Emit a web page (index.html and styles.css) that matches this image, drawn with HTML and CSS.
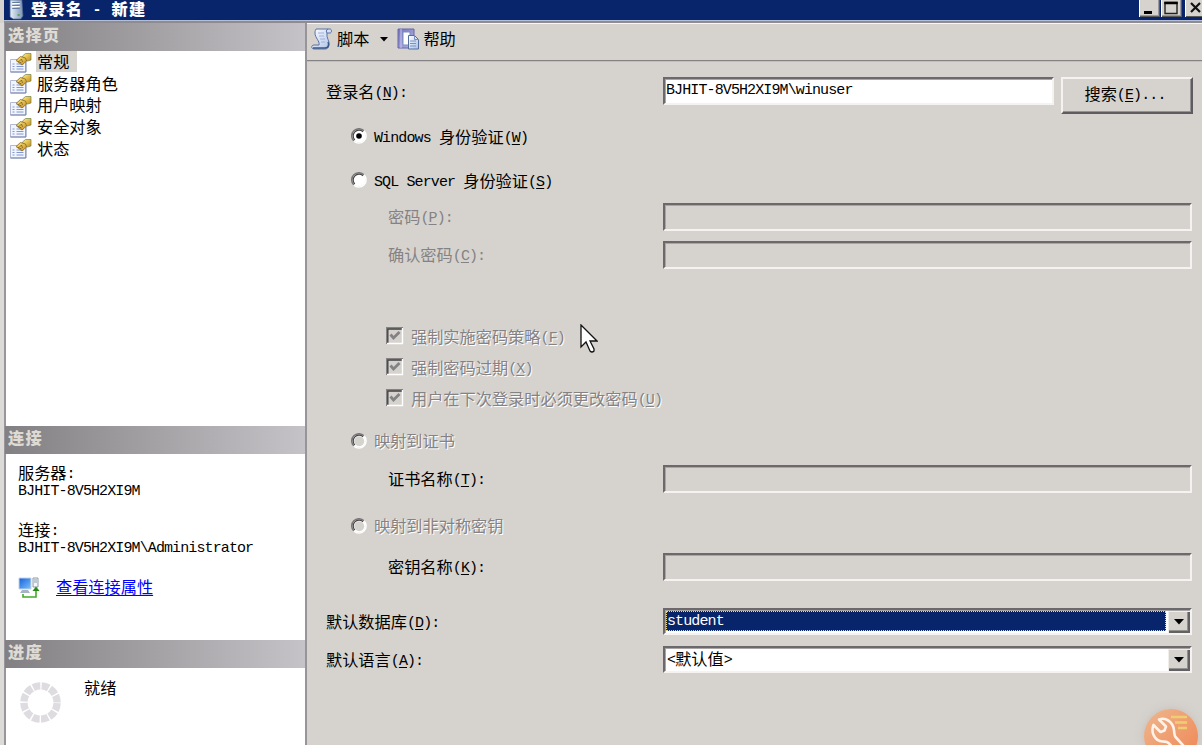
FILE: index.html
```html
<!DOCTYPE html>
<html lang="zh-CN">
<head>
<meta charset="utf-8">
<title>登录名 - 新建</title>
<link rel="stylesheet" href="styles.css">
</head>
<body>
<svg width="0" height="0" class="defs">
  <defs>
    <linearGradient id="gold" x1="0" y1="0" x2="1" y2="1"><stop offset="0" stop-color="#fff08a"/><stop offset="1" stop-color="#c68a16"/></linearGradient>
    <linearGradient id="paper" x1="0" y1="0" x2="1" y2="1"><stop offset="0" stop-color="#ffffff"/><stop offset="1" stop-color="#a9bfe8"/></linearGradient>
    <linearGradient id="book" x1="0" y1="0" x2="1" y2="1"><stop offset="0" stop-color="#7474bd"/><stop offset="1" stop-color="#b7b6e6"/></linearGradient>
    <linearGradient id="screen" x1="0" y1="0" x2="1" y2="1"><stop offset="0" stop-color="#1262d8"/><stop offset="1" stop-color="#7fc0ff"/></linearGradient>
    <linearGradient id="tower" x1="0" y1="0" x2="1" y2="0"><stop offset="0" stop-color="#e8f1fb"/><stop offset="1" stop-color="#7d94b5"/></linearGradient>
    <symbol id="page-icon" viewBox="0 0 22 20">
      <path d="M1 6.500h15v12.500H1z" fill="#f1f5ff" stroke="#b2b9d4"/>
      <path d="M1 19h15.500V8" fill="none" stroke="#7583ad"/>
      <path d="M3 11h2m2 0h7M3 13.500h2m2 0h7M3 16h2m2 0h7" stroke="#8296cf"/>
      <path d="M13 3l3-2.500h5.500V7l-3.500 1-4-1z" fill="url(#gold)" stroke="#718149" stroke-width=".7"/>
      <path d="M6.500 7.500L11 3.500l5 1.500 1 3-4.500 4z" fill="url(#gold)" stroke="#8b681d" stroke-width=".8"/>
      <path d="M10 8l2-2 1 3M8 8l4 2" fill="none" stroke="#765b21" stroke-width=".8"/>
    </symbol>
  </defs>
</svg>
<div class="window">
  <header class="titlebar">
    <svg class="server" viewBox="0 0 14 20" preserveAspectRatio="none"><path d="M1 0h11l1 16-2 3H4l-3-2z" fill="url(#tower)" stroke="#526b95" stroke-width=".7"/><path d="M3 2.500h7M3 5.500h7M3 8.500h7" stroke="#647b9e"/><path d="M3 3.500h7M3 6.500h7" stroke="#fff"/><path d="M8 14h2v2H8z" fill="#5da45b"/></svg>
    <h1>登录名<span class="l"> - </span>新建</h1>
    <div class="controls">
      <i><svg viewBox="0 0 20 17"><path d="M5 12.500h8" stroke="#000" stroke-width="3"/></svg></i>
      <i><svg viewBox="0 0 20 17"><path d="M4 2.500h12v11H4z" fill="none" stroke="#222" stroke-width="1.400"/><path d="M3.300 3h13.400" stroke="#000" stroke-width="2.500"/></svg></i>
      <i class="close"><svg viewBox="0 0 20 17"><path d="M6 3l9 9M15 3l-9 9" stroke="#111" stroke-width="2.200"/></svg></i>
    </div>
  </header>
  <div class="body">
    <aside class="side">
      <h2>选择页</h2>
      <ul class="pages">
        <li><svg><use href="#page-icon"/></svg><span class="selected">常规</span></li>
        <li><svg><use href="#page-icon"/></svg><span>服务器角色</span></li>
        <li><svg><use href="#page-icon"/></svg><span>用户映射</span></li>
        <li><svg><use href="#page-icon"/></svg><span>安全对象</span></li>
        <li><svg><use href="#page-icon"/></svg><span>状态</span></li>
      </ul>
      <h2>连接</h2>
      <section class="connection">
        <p>服务器<span class="l">:</span></p>
        <p class="value l">BJHIT-8V5H2XI9M</p>
        <p class="second">连接<span class="l">:</span></p>
        <p class="value l">BJHIT-8V5H2XI9M\Administrator</p>
        <div class="props">
          <svg viewBox="0 0 22 22"><path d="M1 1h12v11H1z" fill="url(#screen)" stroke="#c3d3e7"/><path d="M4 13h6l2 3H2z" fill="#a7b4c6"/><path d="M15 1h5v9h-5z" fill="#f3f5f8" stroke="#8e9bad"/><path d="M16 3h3M16 5h3" stroke="#8e9bad"/><path d="M5 17v3h13v-8" fill="none" stroke="#46a928" stroke-width="1.600"/><path d="M14.500 14L18 9.500l3.500 4.500z" fill="#278a17"/></svg>
          <a href="#">查看连接属性</a>
        </div>
      </section>
      <h2>进度</h2>
      <section class="progress">
        <svg viewBox="0 0 40 40"><circle cx="20" cy="20" r="16.200" fill="none" stroke="#dedce0" stroke-width="7.200" stroke-dasharray="7.100 1.382" stroke-dashoffset="-.69"/></svg>
        <span>就绪</span>
      </section>
    </aside>
    <main class="main">
      <nav class="toolbar">
        <svg viewBox="0 0 22 22"><path d="M5 1h14c2 0 2 4 0 4h-3c-1 5 3 8 2 12-.5 3-2 4-4 4H3c-3 0-3-4 0-4h5c1-4-4-7-4-12 0-2 .5-3 1-4z" fill="url(#paper)" stroke="#5870a5"/><path d="M7 5h6M8 8h5M9 11h5M10 14h4" stroke="#9db2dc"/><path d="M2 20h12c4 0 4-4 3-6" fill="none" stroke="#3c5787" stroke-width="1.500"/><path d="M16 5c-1-1-1-3 1-4" fill="none" stroke="#5870a5"/></svg>
        <span>脚本</span>
        <svg class="arrow" viewBox="0 0 8 5"><path d="M0 0h8L4 4.500z"/></svg>
        <svg viewBox="0 0 22 22"><path d="M1 1h16v19H1z" fill="url(#book)" stroke="#6766a9"/><path d="M4 1v19" stroke="#c8c8f0"/><path d="M6 4h7v13H6z" fill="#fff" stroke="#7790bd"/><path d="M11.500 7.500h6l4 4V21h-10z" fill="url(#paper)" stroke="#536f9e"/><path d="M17.500 7.500v4h4M13 13h6M13 15.500h6M13 18h6" fill="none" stroke="#7791c2"/></svg>
        <span class="help">帮助</span>
      </nav>
      <form class="form">
        <div class="row login">
          <label>登录名<span class="l">(<u>N</u>):</span></label>
          <div class="field active l">BJHIT-8V5H2XI9M\winuser</div>
          <button type="button">搜索<span class="l">(<u>E</u>)...</span></button>
        </div>
        <div class="option windows"><svg viewBox="0 0 16 16"><use href="#radio-on"/></svg><span><span class="l">Windows </span>身份验证<span class="l">(<u>W</u>)</span></span></div>
        <div class="option sql"><svg viewBox="0 0 16 16"><use href="#radio"/></svg><span><span class="l">SQL Server </span>身份验证<span class="l">(<u>S</u>)</span></span></div>
        <div class="row password sub dim"><label>密码<span class="l">(<u>P</u>):</span></label><div class="field"></div></div>
        <div class="row confirm sub dim"><label>确认密码<span class="l">(<u>C</u>):</span></label><div class="field"></div></div>
        <div class="checks">
          <div class="check"><svg viewBox="0 0 18 18"><use href="#checkbox"/></svg><span>强制实施密码策略<span class="l">(<u>F</u>)</span></span></div>
          <div class="check"><svg viewBox="0 0 18 18"><use href="#checkbox"/></svg><span>强制密码过期<span class="l">(<u>X</u>)</span></span></div>
          <div class="check"><svg viewBox="0 0 18 18"><use href="#checkbox"/></svg><span>用户在下次登录时必须更改密码<span class="l">(<u>U</u>)</span></span></div>
        </div>
        <div class="option cert off"><svg viewBox="0 0 16 16"><use href="#radio-off"/></svg><span>映射到证书</span></div>
        <div class="row certname sub"><label>证书名称<span class="l">(<u>T</u>):</span></label><div class="field"></div></div>
        <div class="option key off"><svg viewBox="0 0 16 16"><use href="#radio-off"/></svg><span>映射到非对称密钥</span></div>
        <div class="row keyname sub"><label>密钥名称<span class="l">(<u>K</u>):</span></label><div class="field"></div></div>
        <div class="row database"><label>默认数据库<span class="l">(<u>D</u>):</span></label>
          <div class="field combo"><span class="choice picked l">student</span><i class="drop"><svg viewBox="0 0 10 6"><path d="M0 0h10L5 5.500z"/></svg></i></div></div>
        <div class="row language"><label>默认语言<span class="l">(<u>A</u>):</span></label>
          <div class="field combo"><span class="choice"><span class="l">&lt;</span>默认值<span class="l">&gt;</span></span><i class="drop"><svg viewBox="0 0 10 6"><path d="M0 0h10L5 5.500z"/></svg></i></div></div>
      </form>
    </main>
  </div>
  <svg class="cursor" viewBox="0 0 18 30"><path d="M1 1v22l5-5 4 9q2 2 4 0v-2l-4-8h7z" fill="#fff" stroke="#111" stroke-width="1.300"/></svg>
  <div class="tool">
    <svg viewBox="0 0 54 54"><path d="M27 8h16M31 13.500h12M34 19h9" stroke="#edcf72" stroke-width="2.600"/><path d="M15 10.500l7 7-1.500 4-4 1.500-7-7c-3 7 1 16 9 16.500 3 .3 4-.5 6 1.500l12 12 6-6-11-12c-1.500-2-1-4-1.500-7-1-8-8-13-15-10.500z" fill="none" stroke="#fff2e9" stroke-width="2.600" stroke-linejoin="round"/></svg>
  </div>
</div>
<svg width="0" height="0" class="defs">
  <defs>
    <symbol id="radio" viewBox="0 0 16 16"><circle cx="8" cy="8" r="6.500" fill="#fff"/><path d="M13 2.800A7 7 0 0 0 2.800 13" fill="none" stroke="#777577" stroke-width="1.400"/><path d="M12 3.800A5.800 5.800 0 0 0 3.800 12" fill="none" stroke="#464446" stroke-width="1.200"/><path d="M13 2.800A7 7 0 0 1 2.800 13" fill="none" stroke="#fff" stroke-width="1.400"/></symbol>
    <symbol id="radio-on" viewBox="0 0 16 16"><use href="#radio"/><circle cx="8" cy="8" r="2.800"/></symbol>
    <symbol id="radio-off" viewBox="0 0 16 16"><use href="#radio"/><circle cx="8.200" cy="8.200" r="5" fill="#d6d3ce"/></symbol>
    <symbol id="checkbox" viewBox="0 0 18 18"><path d="M.5 17V.7H17" fill="none" stroke="#848284" stroke-width="1.400"/><path d="M1.800 16V2H16" fill="none" stroke="#424142" stroke-width="1.400"/><path d="M1 16.500h15.500V1" fill="none" stroke="#fff" stroke-width="1.400"/><path d="M4.500 7.500L7.500 11l6-6" fill="none" stroke="#848284" stroke-width="2.800"/></symbol>
  </defs>
</svg>
</body>
</html>
```
FILE: styles.css
```css
* { box-sizing: border-box; }
body { margin: 0; overflow: hidden; font: 16.200px/20px "Noto Sans CJK SC", sans-serif; color: #000; }
.defs { position: absolute; }
h1, h2, p, ul { margin: 0; padding: 0; }
i { font-style: normal; }
svg { display: block; flex: none; }
.l { font-family: "Liberation Mono", monospace; font-size: 15px; letter-spacing: -.890px; line-height: 1; white-space: pre; }
span.l { vertical-align: 1px; }
u { text-underline-offset: 2px; }
.window { position: relative; display: flex; flex-direction: column; width: 1202px; height: 745px; overflow: hidden; background: #d6d3ce; }

.titlebar { display: flex; flex: none; height: 23px; margin-left: 4px; padding-left: 5px; background: #08246b; border-bottom: 2px solid #8e8c91; box-shadow: inset 0 -1px #b4bdd6; }
.server { width: 15px; height: 20px; }
h1 { height: 20px; margin-left: 7px; font-size: 16.200px; line-height: 17px; letter-spacing: 1.200px; color: #fff; font-weight: 900; }
h1 .l { font-weight: 700; letter-spacing: .450px; }
.controls { display: flex; margin-left: auto; gap: 1px; }
.controls i { width: 21px; height: 17px; background: #d6d3ce; box-shadow: inset 1px 0 #fff, inset -1px -1px #5a5a5a, inset -2px -2px #9b999b; }
.controls svg { width: 20px; height: 17px; }
.controls .close { width: 17px; margin-left: 2px; overflow: hidden; box-shadow: inset 1px 0 #fff, inset 0 -1px #5a5a5a; }

.body { display: flex; flex: 1; min-height: 0; }
.side { display: flex; flex-direction: column; flex: none; width: 307px; border-left: 4px solid #dddbd7; border-right: 2px solid #97959a; background: #fff; box-shadow: inset 2px 0 #98969a; }
h2 { height: 28px; flex: none; margin-left: 1px; padding-left: 3px; font-size: 16.200px; line-height: 23px; letter-spacing: 1.200px; font-weight: 900; color: #dedbd5; background: linear-gradient(90deg, #828082, #c6c3c8); }
.pages { height: 375px; flex: none; padding: 0 0 0 5px; list-style: none; }
.pages li { display: flex; height: 21.600px; align-items: center; }
.pages svg { width: 23px; height: 20px; margin-top: 2px; }
.pages span { margin-left: 4px; padding: 0 1px; line-height: 21px; }
.pages .selected { padding-right: 8px; background: #d6d3ce; }
.connection { height: 186px; flex: none; padding: 8px 0 0 14px; }
.connection p { height: 20px; line-height: 20px; }
.connection .value { height: 14px; line-height: 20px; }
.connection .second { margin-top: 23px; }
.props { display: flex; align-items: center; margin-top: 20px; }
.props svg { width: 22px; height: 22px; margin-top: 4px; }
.props a { margin-left: 16px; color: #00f; text-underline-offset: 2px; }
.progress { display: flex; padding: 14px 0 0 16px; }
.progress svg { width: 41px; height: 41px; }
.progress span { margin-left: 23px; line-height: 11px; }

.main { flex: 1; min-width: 0; border-top: 1px solid #f8f7f5; }
.toolbar { display: flex; height: 37px; padding: 0 0 7px 4px; align-items: center; border-bottom: 1px solid #848284; box-shadow: 0 1px #c2bfbd; }
.toolbar svg { width: 22px; height: 22px; }
.toolbar span { margin-left: 4px; line-height: 18px; padding-bottom: 1px; }
.toolbar .arrow { width: 8px; height: 5px; margin: 2px 9px 0 11px; }
.toolbar .help { margin-left: 4px; }

.form { display: flex; flex-direction: column; padding: 16px 0 0 19px; }
.row { display: flex; height: 28px; flex: none; align-items: center; }
.row label { width: 337px; flex: none; padding-bottom: 2px; }
.sub label { padding-left: 62px; }
.dim label { color: #848284; }
.field { width: 529px; height: 28px; border: 2px solid; border-color: #6b696b #f5f3f1 #f5f3f1 #6b696b; box-shadow: inset 1px 1px #a8a5a4; }
.field.active { width: 391px; padding-left: 1px; background: #fff; line-height: 23px; }
.login { height: 37px; align-items: flex-start; }
.login label { padding-top: 4px; }
button { width: 132px; height: 37px; margin-left: 7px; padding: 0 4px 5px 0; font: inherit; color: #000; background: #d6d3ce; border: 2px solid; border-color: #f5f3f1 #5e5c5e #5e5c5e #f5f3f1; box-shadow: inset -1px -1px #949294; }
.option { display: flex; height: 20px; flex: none; align-items: center; padding-left: 25px; }
.option svg { width: 16px; height: 16px; margin-right: 7px; }
.option span, .check span { margin-top: -1px; }
.windows { margin-top: 12px; }
.sql { margin-top: 24px; }
.password { margin-top: 12px; height: 29px; }
.confirm { margin-top: 9px; height: 29px; }
.checks { display: flex; flex-direction: column; gap: 11px; margin-top: 57px; padding-left: 60px; }
.check { display: flex; height: 20px; align-items: center; }
.check svg { width: 18px; height: 18px; margin-right: 7px; }
.check, .off { color: #848284; text-shadow: 1px 1px #fff; }
.cert { margin-top: 23px; }
.off span { margin-top: -2px; }
.certname { margin-top: 14px; }
.key { margin-top: 23px; }
.keyname { margin-top: 17px; }
.database { margin-top: 27px; height: 27px; }
.language { margin-top: 11px; height: 27px; }
.combo { display: flex; height: 27px; padding: 1px 0 0 1px; background: #fff; }
.choice { flex: 1; line-height: 19px; padding-left: 1px; }
.picked { margin-bottom: 2px; margin-right: 2px; padding-left: 0; line-height: 20px; color: #fff; background: #08246b; border: 1px dotted #f0d88b; }
.drop { display: grid; place-items: center; width: 22px; background: #d6d3ce; box-shadow: inset 1px 1px #f0eeeb, inset -2px -2px #636163, inset -3px -3px #94928f; }
.drop svg { width: 10px; height: 6px; }

.cursor { position: absolute; left: 580px; top: 324px; width: 18px; height: 30px; }
.tool { position: absolute; left: 1144px; top: 709px; width: 54px; height: 54px; border-radius: 50%; background: linear-gradient(135deg, #eeb78e, #f08452); box-shadow: 0 0 9px #b8aaa080; }
.tool svg { width: 54px; height: 54px; }
```
